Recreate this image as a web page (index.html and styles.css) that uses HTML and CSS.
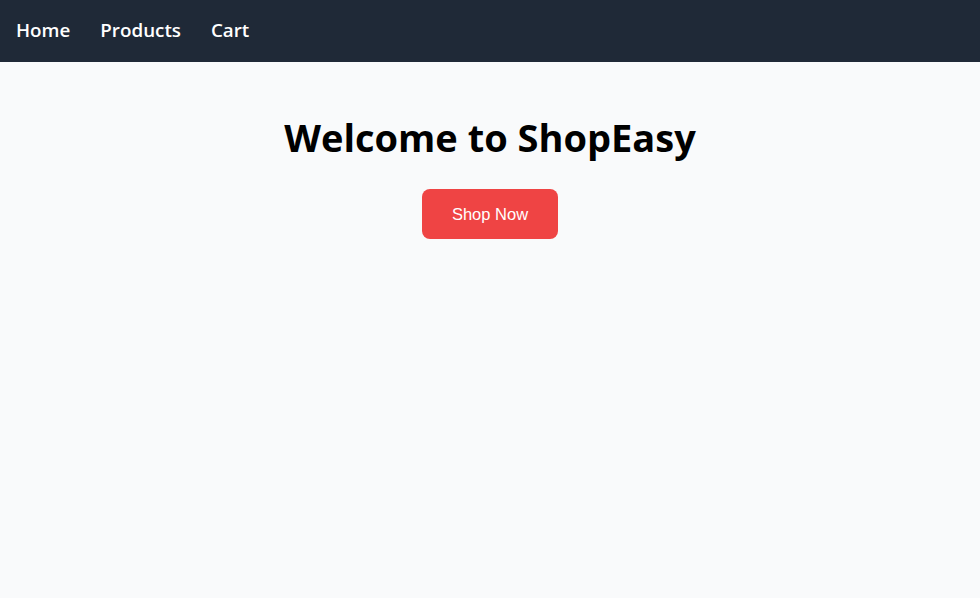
FILE: index.html
```html
<!DOCTYPE html>
<html lang="en">
<head>
<meta charset="utf-8">
<title>ShopEasy</title>
<link rel="stylesheet" href="styles.css">
</head>
<body>
<nav class="nav">
  <a class="nav-link" href="#">Home</a>
  <a class="nav-link" href="#">Products</a>
  <a class="nav-link" href="#">Cart</a>
</nav>
<main class="hero">
  <h1 class="hero-title">Welcome to ShopEasy</h1>
  <button class="hero-btn" type="button">Shop Now</button>
</main>
</body>
</html>
```

FILE: styles.css
```css
html, body {
  margin: 0;
  padding: 0;
  background: #f9fafb;
  height: 100%;
}
body {
  font-family: "Open Sans", "Noto Sans", sans-serif;
}
.nav {
  display: flex;
  align-items: center;
  gap: 30px;
  height: 62px;
  padding: 0 0 2px 16px;
  background: #1f2937;
  box-sizing: border-box;
}
.nav-link {
  color: #ffffff;
  text-decoration: none;
  font-weight: 600;
  font-size: 18.8px;
  line-height: 24px;
}
.hero {
  display: flex;
  flex-direction: column;
  align-items: center;
  padding-top: 47px;
}
.hero-title {
  margin: 0;
  font-size: 38px;
  font-weight: 700;
  line-height: 56px;
  color: #000000;
}
.hero-btn {
  margin-top: 24px;
  width: 136px;
  height: 50px;
  border: none;
  border-radius: 8px;
  background: #ef4444;
  color: #ffffff;
  font-family: "Liberation Sans", Arial, sans-serif;
  font-size: 16.5px;
  cursor: pointer;
}
```
